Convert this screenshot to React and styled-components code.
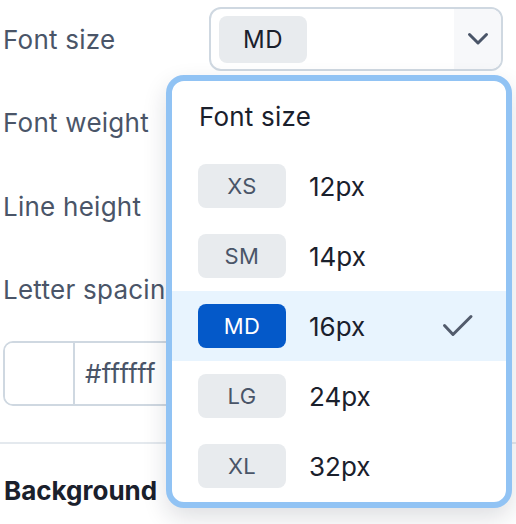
import React from "react";
import styled, { createGlobalStyle } from "styled-components";

const GlobalStyle = createGlobalStyle`
  html, body { margin: 0; padding: 0; background: #ffffff; }
  body { font-family: Inter, "Noto Sans", "Liberation Sans", sans-serif; -webkit-font-smoothing: antialiased; }
  * { box-sizing: border-box; }
`;

const Page = styled.div`
  position: relative;
  width: 516px;
  height: 524px;
  overflow: hidden;
  background: #ffffff;
`;

const Fields = styled.div`
  display: flex;
  flex-direction: column;
  gap: 19.5px;
  padding: 7px 13px 0 3px;
`;

const Field = styled.div`
  display: grid;
  grid-template-columns: 206px 1fr;
  align-items: center;
  height: 64px;
`;

const Label = styled.span`
  font-size: 26px;
  letter-spacing: 0.25px;
  color: #4a5568;
  white-space: nowrap;
`;

const SelectBox = styled.div`
  display: flex;
  align-items: stretch;
  height: 64px;
  border: 2px solid #cfd8e1;
  border-radius: 12px;
  overflow: hidden;
  background: #ffffff;
`;

const SelectValue = styled.div`
  flex: 1;
  display: flex;
  align-items: center;
  padding-left: 8px;
`;

const Chevron = styled.div`
  width: 47px;
  display: flex;
  align-items: center;
  justify-content: center;
  background: #f7f8fa;
  color: #4a5568;
`;

const Badge = styled.span`
  display: inline-flex;
  align-items: center;
  justify-content: center;
  width: 88px;
  height: ${(p) => (p.$large ? "47px" : "44px")};
  border-radius: 8px;
  font-size: ${(p) => (p.$large ? "24px" : "22px")};
  letter-spacing: 0.4px;
  background: ${(p) => (p.$active ? "#0459c9" : "#e8ebee")};
  color: ${(p) => (p.$active ? "#ffffff" : p.$large ? "#1a202c" : "#4a5568")};
  flex-shrink: 0;
`;

const ColorBox = styled.div`
  display: flex;
  height: 65px;
  border: 2px solid #cfd8e1;
  border-radius: 10px;
  overflow: hidden;
`;

const Swatch = styled.div`
  width: 70px;
  background: #ffffff;
  border-right: 2px solid #cfd8e1;
`;

const HexText = styled.div`
  display: flex;
  align-items: center;
  padding-left: 10px;
  font-size: 26px;
  letter-spacing: 0.25px;
  color: #4a5568;
`;

const Divider = styled.hr`
  margin: 36px 0 0 0;
  border: 0;
  height: 2px;
  background: #e4e9ee;
`;

const SectionTitle = styled.h3`
  margin: 0;
  padding: 31px 0 0 4px;
  font-size: 26px;
  font-weight: 700;
  color: #1a202c;
`;

const Menu = styled.div`
  position: absolute;
  left: 166px;
  top: 75px;
  width: 346px;
  height: 433px;
  border: 6px solid #91c3f4;
  border-radius: 18px;
  background: #ffffff;
  overflow: hidden;
  box-shadow: 0 10px 24px rgba(20, 30, 50, 0.14);
`;

const MenuHeader = styled.div`
  height: 70px;
  display: flex;
  align-items: center;
  padding-left: 27px;
  font-size: 26px;
  letter-spacing: 0.2px;
  color: #1a202c;
`;

const Option = styled.div`
  height: 70px;
  display: flex;
  align-items: center;
  padding: 0 32px 0 26px;
  background: ${(p) => (p.$selected ? "#e8f4fe" : "transparent")};
`;

const OptionValue = styled.span`
  margin-left: 23px;
  flex: 1;
  font-size: 26px;
  color: #1a202c;
`;

const ChevronIcon = () => (
  <svg width="22" height="14" viewBox="0 0 22 14" fill="none">
    <path d="M2.5 2.5 L11 11 L19.5 2.5" stroke="currentColor" strokeWidth="3" strokeLinecap="round" strokeLinejoin="round" />
  </svg>
);

const CheckIcon = () => (
  <svg width="32" height="24" viewBox="0 0 32 24" fill="none">
    <path d="M2.5 11.5 L11 20.5 L29 2.5" stroke="#525b6c" strokeWidth="3" strokeLinecap="round" strokeLinejoin="round" />
  </svg>
);

const options = [
  { key: "XS", value: "12px" },
  { key: "SM", value: "14px" },
  { key: "MD", value: "16px" },
  { key: "LG", value: "24px" },
  { key: "XL", value: "32px" },
];

export default function App() {
  const selected = "MD";
  return (
    <Page>
      <GlobalStyle />
      <Fields>
        <Field>
          <Label>Font size</Label>
          <SelectBox>
            <SelectValue>
              <Badge $large>MD</Badge>
            </SelectValue>
            <Chevron>
              <ChevronIcon />
            </Chevron>
          </SelectBox>
        </Field>
        <Field>
          <Label>Font weight</Label>
          <SelectBox />
        </Field>
        <Field>
          <Label>Line height</Label>
          <SelectBox />
        </Field>
        <Field>
          <Label>Letter spacing</Label>
          <SelectBox />
        </Field>
        <ColorBox>
          <Swatch />
          <HexText>#ffffff</HexText>
        </ColorBox>
      </Fields>
      <Divider />
      <SectionTitle>Background</SectionTitle>

      <Menu>
        <MenuHeader>Font size</MenuHeader>
        {options.map((o) => (
          <Option key={o.key} $selected={o.key === selected}>
            <Badge $active={o.key === selected}>{o.key}</Badge>
            <OptionValue>{o.value}</OptionValue>
            {o.key === selected && <CheckIcon />}
          </Option>
        ))}
      </Menu>
    </Page>
  );
}
